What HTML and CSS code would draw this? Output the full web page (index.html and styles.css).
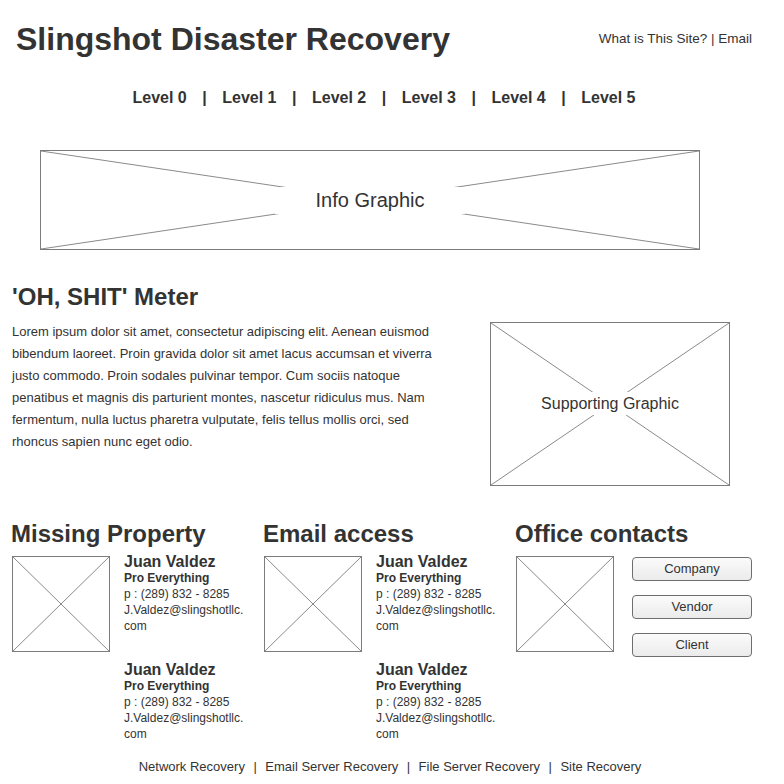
FILE: index.html
```html
<!DOCTYPE html>
<html lang="en">
<head>
<meta charset="utf-8">
<title>Slingshot Disaster Recovery</title>
<link rel="stylesheet" href="styles.css">
</head>
<body>
<header class="top">
  <h1 class="site-title">Slingshot Disaster Recovery</h1>
  <div class="top-links">What is This Site? | Email</div>
</header>

<nav class="levels">
  <span>Level 0</span><span class="sep">|</span>
  <span>Level 1</span><span class="sep">|</span>
  <span>Level 2</span><span class="sep">|</span>
  <span>Level 3</span><span class="sep">|</span>
  <span>Level 4</span><span class="sep">|</span>
  <span>Level 5</span>
</nav>

<div class="ph ph-info">
  <svg class="ph-x" viewBox="0 0 100 100" preserveAspectRatio="none"><line x1="0" y1="0" x2="100" y2="100"/><line x1="100" y1="0" x2="0" y2="100"/></svg>
  <span class="ph-label ph-label-info">Info Graphic</span>
</div>

<section class="meter">
  <h2 class="meter-title">'OH, SHIT' Meter</h2>
  <div class="meter-row">
    <p class="meter-text">Lorem ipsum dolor sit amet, consectetur adipiscing elit. Aenean euismod bibendum laoreet. Proin gravida dolor sit amet lacus accumsan et viverra justo commodo. Proin sodales pulvinar tempor. Cum sociis natoque penatibus et magnis dis parturient montes, nascetur ridiculus mus. Nam fermentum, nulla luctus pharetra vulputate, felis tellus mollis orci, sed rhoncus sapien nunc eget odio.</p>
    <div class="ph ph-support">
      <svg class="ph-x" viewBox="0 0 100 100" preserveAspectRatio="none"><line x1="0" y1="0" x2="100" y2="100"/><line x1="100" y1="0" x2="0" y2="100"/></svg>
      <span class="ph-label ph-label-support">Supporting Graphic</span>
    </div>
  </div>
</section>

<section class="cols">
  <div class="col">
    <h2 class="col-title">Missing Property</h2>
    <div class="col-body">
      <div class="ph ph-thumb"><svg class="ph-x" viewBox="0 0 100 100" preserveAspectRatio="none"><line x1="0" y1="0" x2="100" y2="100"/><line x1="100" y1="0" x2="0" y2="100"/></svg></div>
      <div class="contacts">
        <div class="contact">
          <div class="c-name">Juan Valdez</div>
          <div class="c-role">Pro Everything</div>
          <div class="c-line">p : (289) 832 - 8285</div>
          <div class="c-line">J.Valdez@slingshotllc.<wbr>com</div>
        </div>
        <div class="contact">
          <div class="c-name">Juan Valdez</div>
          <div class="c-role">Pro Everything</div>
          <div class="c-line">p : (289) 832 - 8285</div>
          <div class="c-line">J.Valdez@slingshotllc.<wbr>com</div>
        </div>
      </div>
    </div>
  </div>

  <div class="col">
    <h2 class="col-title">Email access</h2>
    <div class="col-body">
      <div class="ph ph-thumb"><svg class="ph-x" viewBox="0 0 100 100" preserveAspectRatio="none"><line x1="0" y1="0" x2="100" y2="100"/><line x1="100" y1="0" x2="0" y2="100"/></svg></div>
      <div class="contacts">
        <div class="contact">
          <div class="c-name">Juan Valdez</div>
          <div class="c-role">Pro Everything</div>
          <div class="c-line">p : (289) 832 - 8285</div>
          <div class="c-line">J.Valdez@slingshotllc.<wbr>com</div>
        </div>
        <div class="contact">
          <div class="c-name">Juan Valdez</div>
          <div class="c-role">Pro Everything</div>
          <div class="c-line">p : (289) 832 - 8285</div>
          <div class="c-line">J.Valdez@slingshotllc.<wbr>com</div>
        </div>
      </div>
    </div>
  </div>

  <div class="col">
    <h2 class="col-title">Office contacts</h2>
    <div class="col-body">
      <div class="ph ph-thumb"><svg class="ph-x" viewBox="0 0 100 100" preserveAspectRatio="none"><line x1="0" y1="0" x2="100" y2="100"/><line x1="100" y1="0" x2="0" y2="100"/></svg></div>
      <div class="buttons">
        <button class="btn" type="button">Company</button>
        <button class="btn" type="button">Vendor</button>
        <button class="btn" type="button">Client</button>
      </div>
    </div>
  </div>
</section>

<footer class="foot">
  <span>Network Recovery</span><span>|</span>
  <span>Email Server Recovery</span><span>|</span>
  <span>File Server Recovery</span><span>|</span>
  <span>Site Recovery</span>
</footer>
</body>
</html>
```

FILE: styles.css
```css
html, body {
  margin: 0;
  padding: 0;
  background: #ffffff;
}

body {
  font-family: "Liberation Sans", Arial, sans-serif;
  color: #333333;
  width: 784px;
  overflow: hidden;
}

/* header */
.top {
  display: flex;
  justify-content: space-between;
  align-items: center;
  padding: 21px 32px 0 16px;
}

.site-title {
  margin: 0;
  font-size: 32px;
  line-height: 36px;
  font-weight: 700;
}

.top-links {
  font-size: 13.5px;
  line-height: 16px;
}

/* level nav */
.levels {
  margin-top: 31px;
  padding-right: 16px;
  display: flex;
  justify-content: center;
  gap: 15.5px;
  font-size: 16px;
  line-height: 20px;
  font-weight: 700;
}

/* placeholders */
.ph {
  position: relative;
  box-sizing: border-box;
  border: 1px solid #7c7c7c;
  display: flex;
  align-items: center;
  justify-content: center;
  background: #ffffff;
}

.ph-x {
  position: absolute;
  left: 0;
  top: 0;
  width: 100%;
  height: 100%;
}

.ph-x line {
  stroke: #8a8a8a;
  stroke-width: 1;
  vector-effect: non-scaling-stroke;
}

.ph-label {
  position: relative;
  background: #ffffff;
  white-space: nowrap;
}

.ph-info {
  margin: 42px 0 0 40px;
  width: 660px;
  height: 100px;
}

.ph-label-info {
  font-size: 20px;
  line-height: 27px;
  padding: 0 41px;
}

.ph-support {
  flex-shrink: 0;
  margin-left: 38px;
  margin-top: 1px;
  width: 240px;
  height: 164px;
}

.ph-label-support {
  font-size: 16px;
  line-height: 23px;
  padding: 0 4px;
  top: -1px;
}

/* meter section */
.meter {
  margin-top: 33px;
  padding-left: 12px;
}

.meter-title {
  margin: 0;
  font-size: 24px;
  line-height: 28px;
  font-weight: 700;
}

.meter-row {
  margin-top: 10px;
  display: flex;
  align-items: flex-start;
}

.meter-text {
  margin: 0;
  width: 440px;
  font-size: 13px;
  line-height: 22px;
}

/* columns */
.cols {
  margin-top: 34px;
  padding-left: 12px;
  display: grid;
  grid-template-columns: repeat(3, 252px);
}

.col-title {
  margin: 0 0 5px -1px;
  font-size: 24px;
  line-height: 28px;
  font-weight: 700;
  white-space: nowrap;
}

.col-body {
  display: flex;
  align-items: flex-start;
  gap: 14px;
}

.ph-thumb {
  flex-shrink: 0;
  width: 98px;
  height: 96px;
  margin-top: 3px;
}

.contacts {
  display: flex;
  flex-direction: column;
  gap: 27px;
}

.contact {
  width: 130px;
}

.c-name {
  font-size: 16px;
  line-height: 17px;
  font-weight: 700;
}

.c-role {
  font-size: 12px;
  line-height: 16px;
  font-weight: 700;
}

.c-line {
  font-size: 12px;
  line-height: 16px;
}

.buttons {
  display: flex;
  flex-direction: column;
  gap: 14px;
  margin-top: 4px;
  margin-left: 4px;
}

.btn {
  box-sizing: border-box;
  width: 120px;
  height: 24px;
  padding: 0;
  border: 1px solid #6e6e6e;
  border-radius: 4px;
  background: linear-gradient(#fbfbfb, #ebebeb);
  font-family: "Liberation Sans", Arial, sans-serif;
  font-size: 13px;
  line-height: 22px;
  color: #333333;
  text-align: center;
}

/* footer */
.foot {
  margin-top: 17px;
  padding-right: 4px;
  display: flex;
  justify-content: center;
  gap: 8.5px;
  font-size: 13px;
  line-height: 16px;
}
```
